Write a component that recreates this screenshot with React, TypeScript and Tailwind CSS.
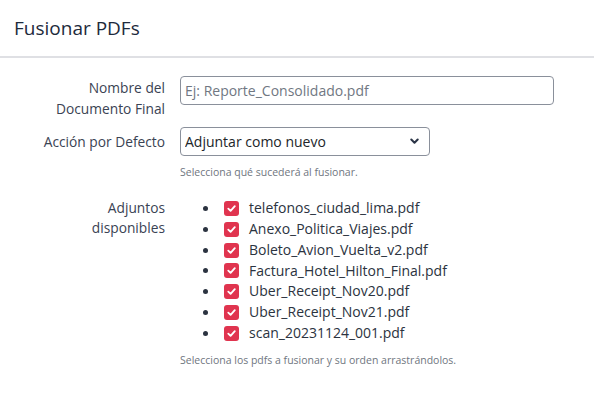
import React from "react";

const files = [
  "telefonos_ciudad_lima.pdf",
  "Anexo_Politica_Viajes.pdf",
  "Boleto_Avion_Vuelta_v2.pdf",
  "Factura_Hotel_Hilton_Final.pdf",
  "Uber_Receipt_Nov20.pdf",
  "Uber_Receipt_Nov21.pdf",
  "scan_20231124_001.pdf",
];

function Check() {
  return (
    <span className="ml-[4px] mr-[10px] flex h-[15px] w-[15px] shrink-0 items-center justify-center rounded-[3px] bg-[#e0344f]">
      <svg width="11" height="11" viewBox="0 0 12 12" fill="none">
        <path d="M2.5 6.2 L5 8.6 L9.6 3.4" stroke="white" strokeWidth="2" strokeLinecap="round" strokeLinejoin="round" />
      </svg>
    </span>
  );
}

export default function App() {
  return (
    <div
      className="h-[404px] w-[594px] overflow-hidden bg-white text-[#333a45]"
      style={{ fontFamily: '"Open Sans", "Noto Sans", sans-serif' }}
    >
      <div className="flex h-[58px] items-center border-b-2 border-[#dfe0e4] px-[14px] pt-[1px]">
        <h1 className="text-[19px] font-medium text-[#1d2a3c]">Fusionar PDFs</h1>
      </div>

      <div className="pt-[18px]">
        <div className="mb-[8px] flex items-start">
          <label className="w-[165px] shrink-0 pt-[1px] text-right text-[13.75px] leading-[21px] text-[#3a4353]">
            Nombre del
            <br />
            Documento Final
          </label>
          <input
            className="ml-[15px] h-[29px] w-[374px] rounded-[4px] border border-[#8a909b] px-[4px] text-[14px] text-[#212529] outline-none placeholder:text-[#707782]"
            placeholder="Ej: Reporte_Consolidado.pdf"
          />
        </div>

        <div className="mb-[18px] flex items-start">
          <label className="w-[165px] shrink-0 pt-[4px] text-right text-[13.75px] leading-[21px] text-[#3a4353]">
            Acción por Defecto
          </label>
          <div className="ml-[15px] flex flex-col">
            <div className="relative h-[29px] w-[250px]">
              <select className="h-full w-full appearance-none rounded-[4px] border border-[#8a909b] bg-white px-[4px] text-[14px] text-[#212529] outline-none">
                <option>Adjuntar como nuevo</option>
              </select>
              <svg
                className="pointer-events-none absolute right-[11px] top-[11px]"
                width="9"
                height="7"
                viewBox="0 0 9 7"
                fill="none"
              >
                <path d="M1.3 1.5 L4.5 4.8 L7.7 1.5" stroke="#2a3446" strokeWidth="2" strokeLinecap="round" strokeLinejoin="round" />
              </svg>
            </div>
            <p className="mt-[8px] text-[10.5px] leading-[16px] text-[#6f7680]">
              Selecciona qué sucederá al fusionar.
            </p>
          </div>
        </div>

        <div className="flex items-start">
          <label className="w-[165px] shrink-0 text-right text-[13.75px] leading-[20px] text-[#3a4353]">
            Adjuntos
            <br />
            disponibles
          </label>
          <div className="ml-[15px] flex flex-col">
            <ul className="list-disc pl-[40px]">
              {files.map((f) => (
                <li key={f} className="h-[20.85px] text-[14px] leading-[20.85px] text-[#2b3340]">
                  <span className="flex h-full items-center">
                    <Check />
                    <span>{f}</span>
                  </span>
                </li>
              ))}
            </ul>
            <p className="mt-[8px] text-[10.5px] leading-[16px] text-[#6f7680]">
              Selecciona los pdfs a fusionar y su orden arrastrándolos.
            </p>
          </div>
        </div>
      </div>
    </div>
  );
}
